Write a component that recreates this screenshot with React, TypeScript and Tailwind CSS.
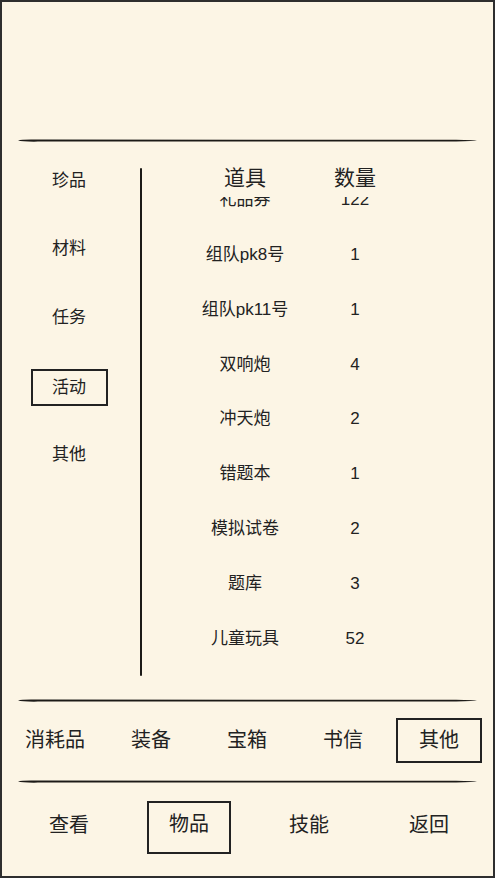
import React from "react";

const font = { fontFamily: '"Liberation Sans", "Noto Sans CJK SC", sans-serif' };

function HLine() {
  return (
    <div className="mx-[16px] h-[3px] flex items-center">
      <svg width="461" height="3" viewBox="0 0 461 3" preserveAspectRatio="none" className="block">
        <path d="M0 1.5 Q 4 0.2 20 0.6 L 440 0.7 Q 458 0.9 461 1.6 Q 458 2.4 440 2.4 L 20 2.6 Q 4 2.8 0 1.5 Z" fill="#1c1a17" />
      </svg>
    </div>
  );
}

const side = ["珍品", "材料", "任务", "活动", "其他"];
const rows: [string, string][] = [
  ["礼品券", "122"],
  ["组队pk8号", "1"],
  ["组队pk11号", "1"],
  ["双响炮", "4"],
  ["冲天炮", "2"],
  ["错题本", "1"],
  ["模拟试卷", "2"],
  ["题库", "3"],
  ["儿童玩具", "52"],
];
const tabs = ["消耗品", "装备", "宝箱", "书信", "其他"];
const bottom = ["查看", "物品", "技能", "返回"];

export default function App() {
  return (
    <div
      className="w-[495px] h-[878px] border-2 border-[#2e2e2e] bg-[#fcf5e5] text-[#222] flex flex-col overflow-hidden"
      style={font}
    >
      <div className="h-[137px] shrink-0" />
      <HLine />
      <div className="h-[557px] shrink-0 flex">
        <div className="w-[134px] shrink-0 flex flex-col pt-[4px]">
          {side.map((s) => (
            <div key={s} className="h-[68.7px] flex items-center justify-center text-[17px]">
              {s === "活动" ? (
                <div className="w-[77px] h-[37px] mt-[3px] border-2 border-[#222] flex items-center justify-center">
                  {s}
                </div>
              ) : (
                s
              )}
            </div>
          ))}
        </div>
        <div className="ml-[4px] mt-[26px] w-[2px] h-[508px] shrink-0 bg-[#1c1a17] rounded-full" />
        <div className="flex-1 flex flex-col">
          <div className="h-[55px] shrink-0 flex pl-[43px] pt-[24px] text-[21px] leading-[24px]">
            <div className="w-[120px] text-center">道具</div>
            <div className="ml-[20px] w-[60px] text-center">数量</div>
          </div>
          <div className="h-[483px] overflow-hidden">
            <div className="mt-[-24.5px]">
              {rows.map(([n, q]) => (
                <div key={n} className="h-[54.8px] flex items-center pl-[43px] text-[17px]">
                  <div className="w-[120px] text-center whitespace-nowrap">{n}</div>
                  <div className="ml-[20px] w-[60px] text-center">{q}</div>
                </div>
              ))}
            </div>
          </div>
        </div>
      </div>
      <HLine />
      <div className="h-[78px] shrink-0 flex items-center pl-[5px] pb-[3px] text-[20px]">
        {tabs.map((t, i) => (
          <div key={i} className="w-[96px] flex items-center justify-center">
            {i === 4 ? (
              <div className="w-[86px] h-[45px] mt-[2px] border-2 border-[#222] flex items-center justify-center pb-[2px]">
                {t}
              </div>
            ) : (
              t
            )}
          </div>
        ))}
      </div>
      <HLine />
      <div className="h-[84px] shrink-0 flex items-center pl-[7px] text-[20px]">
        {bottom.map((t, i) => (
          <div key={i} className="w-[120px] flex items-center justify-center">
            {i === 1 ? (
              <div className="w-[84px] h-[53px] mt-[4px] border-2 border-[#222] flex items-center justify-center pb-[6px]">
                {t}
              </div>
            ) : (
              t
            )}
          </div>
        ))}
      </div>
    </div>
  );
}
